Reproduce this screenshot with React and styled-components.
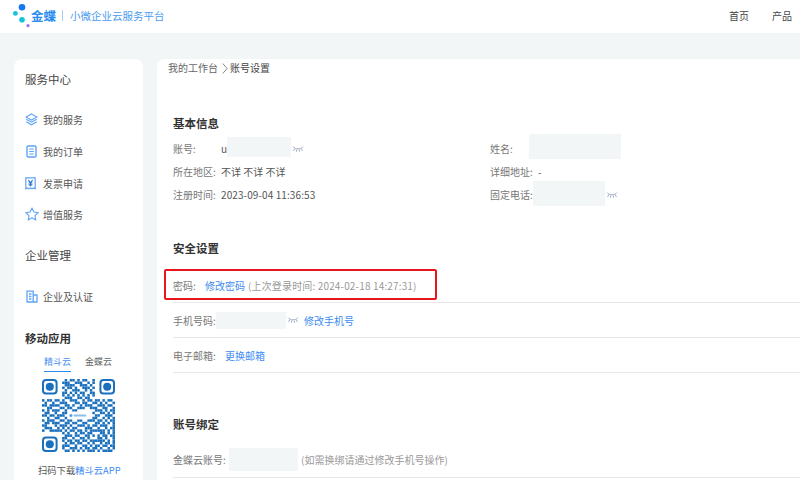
import React from 'react'
import styled, { createGlobalStyle } from 'styled-components'

const FONT = '"Noto Sans CJK SC", "Noto Sans", sans-serif'

// roughly the module layout of the QR code, 29x29 (corners are drawn apart)
const QR_ROWS = [
  '00000000010110101100100000000',
  '00000000111001110010100000000',
  '00000000011110011101000000000',
  '00000000101101001110100000000',
  '00000000010011100101000000000',
  '00000000110101011001100000000',
  '00000000101010101010100000000',
  '00000000011100110110000000000',
  '10110110100111001011011010110',
  '01001001110001101100110101001',
  '11011110011010010111001110110',
  '00110001101100111001110011001',
  '10101110010011000000011101011',
  '01100100110000000000100110101',
  '11011011100000000000011001110',
  '00100110010000000000110010101',
  '10111001101100110011101101011',
  '01101110011011001100011010101',
  '11000101110100111010110111001',
  '01110010101011000111001001011',
  '10011111010110110101111110101',
  '00000000101001011011000110101',
  '00000000011101100110101011011',
  '00000000110010011010001101001',
  '00000000101101101101111110101',
  '00000000010110110010100101101',
  '00000000111001001101011011011',
  '00000000100111010110110100101',
  '00000000011010101011101011110',
]

const QR_BLUE = '#1a70bd'

const MENU = [
  { icon: 'layers', label: '我的服务' },
  { icon: 'order', label: '我的订单' },
  { icon: 'invoice', label: '发票申请' },
  { icon: 'star', label: '增值服务' },
]

function MenuIcon({ name }) {
  const stroke = '#5fa4f5'
  if (name === 'layers') {
    return (
      <svg width="13" height="13" viewBox="0 0 13 13" fill="none" stroke={stroke} strokeWidth="1.1">
        <path d="M6.5 1 12 4 6.5 7 1 4z" />
        <path d="M1.2 6.3 6.5 9.2 11.8 6.3" />
        <path d="M1.2 8.8 6.5 11.8 11.8 8.8" />
      </svg>
    )
  }
  if (name === 'order') {
    return (
      <OffsetIcon $x={1} width="11" height="13" viewBox="0 0 11 13" fill="none" stroke={stroke} strokeWidth="1.4">
        <rect x="1" y="1" width="9" height="11" rx="1.2" />
        <path d="M3.2 4h4.6M3.2 6.5h4.6M3.2 9h4.6" strokeWidth="1" />
      </OffsetIcon>
    )
  }
  if (name === 'invoice') {
    return (
      <svg width="11" height="13" viewBox="0 0 11 13" fill="none" stroke={stroke} strokeWidth="1.2">
        <path d="M.8.8h9.4v11l-1.6-.9-1.5.9-1.6-.9-1.6.9-1.5-.9-1.6.9z" />
        <path d="M3.4 3.2 5.5 5.8l2.1-2.6M3.6 6h3.8M3.6 7.8h3.8M5.5 5.8v3.4" stroke="#2f74d4" />
      </svg>
    )
  }
  if (name === 'star') {
    return (
      <svg width="14" height="14" viewBox="0 0 14 14" fill="none" stroke={stroke} strokeWidth="1.1">
        <path d="M7 1 8.9 5 13.2 5.6 10 8.6 10.8 13 7 10.8 3.2 13 4 8.6.8 5.6 5.1 5z" strokeLinejoin="round" />
      </svg>
    )
  }
  return (
    <OffsetIcon $x={1} width="12" height="13" viewBox="0 0 12 13" fill="none" stroke={stroke} strokeWidth="1.3">
      <path d="M1 12V1.2h6.2V12M7.2 5H11v7H.6" />
      <path d="M3 4h2.4M3 6.5h2.4M3 9h2.4" />
    </OffsetIcon>
  )
}

function EyeClosed() {
  return (
    <EyeIcon width="12" height="8" viewBox="0 0 12 8" fill="none" stroke="#98a6bc" strokeWidth="0.9">
      <path d="M1 1.5C3 4.6 9 4.6 11 1.5" />
      <path d="M2.8 3.6 1.6 6M4.8 4.4 4.4 6.8M7.2 4.4 7.6 6.8M9.2 3.6 10.4 6" />
    </EyeIcon>
  )
}

function Finder({ x, y }) {
  return (
    <g>
      <rect x={x + 0.4} y={y + 0.4} width="5.4" height="5.4" rx="1.2" fill="none" stroke={QR_BLUE} strokeWidth="0.8" />
      <circle cx={x + 3.1} cy={y + 3.1} r="1.6" fill={QR_BLUE} />
    </g>
  )
}

function Qr() {
  return (
    <QrBox width="73" height="73" viewBox="0 0 29 29">
      {QR_ROWS.map((row, y) =>
        row.split('').map((c, x) =>
          c === '1' ? <rect key={`${x}-${y}`} x={x} y={y} width="1" height="1" fill={QR_BLUE} /> : null
        )
      )}
      <Finder x={0} y={0} />
      <Finder x={22.8} y={0} />
      <Finder x={0} y={22.8} />
      <rect x="10.5" y="13" width="8" height="3" fill="#fff" />
      <circle cx="11.5" cy="14.5" r="0.6" fill="#4aa0ee" />
      <rect x="12.6" y="14.1" width="5" height="0.8" fill="#8fbdec" />
    </QrBox>
  )
}

export default function App() {
  return (
    <Page>
      <GlobalStyle />
      <Header>
        <Brand>
          <LogoMark width="23" height="33" viewBox="0 0 23 33">
            <circle cx="14" cy="7.3" r="3.3" fill="#1678f0" />
            <circle cx="7.4" cy="13.4" r="2.4" fill="#12c3dc" />
            <circle cx="14" cy="19.7" r="2.8" fill="#12c3dc" />
            <circle cx="20" cy="25.7" r="1.6" fill="#a56cf0" />
          </LogoMark>
          <BrandText>
            <LogoText>金蝶</LogoText>
            <BrandDivider />
            <BrandTitle>小微企业云服务平台</BrandTitle>
          </BrandText>
        </Brand>
        <Nav>
          <NavItem>首页</NavItem>
          <NavItem>产品</NavItem>
        </Nav>
      </Header>

      <Body>
        <Sidebar>
          <SideTitle>服务中心</SideTitle>
          <MenuList>
            {MENU.map(m => (
              <MenuItem key={m.label}>
                <IconSlot><MenuIcon name={m.icon} /></IconSlot>
                {m.label}
              </MenuItem>
            ))}
          </MenuList>
          <SideTitle>企业管理</SideTitle>
          <CompanyItem>
            <IconSlot><MenuIcon name="company" /></IconSlot>
            企业及认证
          </CompanyItem>
          <MobileTitle>移动应用</MobileTitle>
          <Tabs>
            <Tab $active>精斗云</Tab>
            <Tab>金蝶云</Tab>
          </Tabs>
          <Qr />
          <QrCaption>扫码下载<Link>精斗云APP</Link></QrCaption>
        </Sidebar>

        <Main>
          <Crumb>
            我的工作台
            <CrumbArrow width="6" height="11" viewBox="0 0 6 11" fill="none" stroke="#777" strokeWidth="0.9">
              <path d="M.8.6 5.2 5.5.8 10.4" />
            </CrumbArrow>
            <CrumbCurrent>账号设置</CrumbCurrent>
          </Crumb>

          <SectionTitle>基本信息</SectionTitle>
          <InfoGrid>
            <InfoCell>
              <Label $w={48}>账号:</Label>
              <Value>u</Value>
              <Mask $w={64} $h={20} $mb={4} />
              <EyeClosed />
            </InfoCell>
            <InfoCell>
              <Label $w={39}>姓名:</Label>
              <Mask $w={92} $h={25} $mb={5} />
            </InfoCell>
            <InfoCell>
              <Label $w={48}>所在地区:</Label>
              <Value>不详 不详 不详</Value>
            </InfoCell>
            <InfoCell>
              <Label $w={48}>详细地址:</Label>
              <Value>-</Value>
            </InfoCell>
            <InfoCell>
              <Label $w={48}>注册时间:</Label>
              <Value $spaced>2023-09-04 11:36:53</Value>
            </InfoCell>
            <InfoCell>
              <Label $w={43}>固定电话:</Label>
              <Mask $w={72} $h={25} $mb={2} />
              <EyeClosed />
            </InfoCell>
          </InfoGrid>

          <SecurityTitle>安全设置</SecurityTitle>
          <RowList>
            <Row>
              <Label $w={32}>密码:</Label>
              <Link>修改密码</Link>
              <Hint $spaced>(上次登录时间: 2024-02-18 14:27:31)</Hint>
              <Highlight />
            </Row>
            <Row>
              <Label $w={43}>手机号码:</Label>
              <Mask $w={70} $h={17} />
              <EyeClosed />
              <Link $ml={5}>修改手机号</Link>
            </Row>
            <Row>
              <Label $w={52}>电子邮箱:</Label>
              <Link>更换邮箱</Link>
            </Row>
          </RowList>

          <BindTitle>账号绑定</BindTitle>
          <BindRow>
            <Label $w={56}>金蝶云账号:</Label>
            <Mask $w={69} $h={23} />
            <Hint>(如需换绑请通过修改手机号操作)</Hint>
          </BindRow>
        </Main>
      </Body>
    </Page>
  )
}

const GlobalStyle = createGlobalStyle`
  html, body {
    margin:0;
    padding:0;
    overflow:hidden;
  }
`

const Page = styled.div`
  width:800px;
  height:480px;
  overflow:hidden;
  background:#f2f6f6;
  font-family:${FONT};
  font-size:10px;
  color:#555;
`

const Header = styled.header`
  height:33px;
  background:#fff;
  display:flex;
  align-items:center;
  justify-content:space-between;
`

const Brand = styled.div`
  display:flex;
  align-items:center;
  padding-left:8px;
`

const LogoMark = styled.svg`
  display:block;
`

const BrandText = styled.div`
  display:flex;
  align-items:center;
  padding-bottom:2px;
`

const LogoText = styled.span`
  font-size:12.5px;
  font-weight:700;
  color:#2a8cf0;
  width:25px;
  white-space:nowrap;
`

const BrandDivider = styled.span`
  width:1px;
  height:11px;
  background:#a8cdf5;
  margin:0 7px 0 6px;
`

const BrandTitle = styled.span`
  font-size:10.5px;
  color:#4a9af0;
`

const Nav = styled.nav`
  display:flex;
  gap:23px;
  padding:0 8px 3px 0;
`

const NavItem = styled.span`
  font-size:10px;
  color:#444;
`

const Body = styled.div`
  display:flex;
  gap:14px;
  padding:26px 0 0 14px;
`

const Sidebar = styled.aside`
  width:129px;
  height:440px;
  flex:none;
  background:#fff;
  border-radius:8px 8px 0 0;
  padding:11px 0 0 11px;
  box-sizing:border-box;
`

const SideTitle = styled.div`
  font-size:11.5px;
  line-height:18px;
  color:#444;
`

const MenuList = styled.div`
  display:flex;
  flex-direction:column;
  margin:15px 0 15px;
`

const MenuItem = styled.div`
  height:32px;
  display:flex;
  align-items:center;
  font-size:10px;
  color:#555;
  &:last-child {
    margin-top:-1px;
    margin-bottom:1px;
  }
`

const CompanyItem = styled(MenuItem)`
  margin-top:16px;
`

const IconSlot = styled.span`
  width:18px;
  flex:none;
  display:flex;
  align-items:center;
`

const OffsetIcon = styled.svg`
  margin-left:${p => p.$x}px;
`

const MobileTitle = styled.div`
  font-size:11.5px;
  font-weight:700;
  line-height:18px;
  color:#333;
  margin-top:17px;
`

const Tabs = styled.div`
  display:flex;
  gap:14px;
  margin:8px 0 7px 19px;
`

const Tab = styled.span`
  width:27px;
  font-size:9px;
  line-height:14px;
  padding-bottom:2px;
  text-align:center;
  white-space:nowrap;
  color:${p => (p.$active ? '#4a8ff0' : '#666')};
  border-bottom:1px solid ${p => (p.$active ? '#2a8cf0' : 'transparent')};
`

const QrBox = styled.svg`
  display:block;
  margin-left:17px;
`

const QrCaption = styled.div`
  font-size:9.3px;
  line-height:14px;
  margin-top:11px;
  margin-left:13px;
  white-space:nowrap;
  color:#555;
`

const Link = styled.span`
  color:#3d8bf0;
  white-space:nowrap;
  margin-left:${p => (p.$ml ? `${p.$ml}px` : '0')};
`

const Main = styled.main`
  flex:1;
  height:440px;
  background:#fff;
  border-radius:8px 0 0 0;
  padding:0 0 0 16px;
  box-sizing:border-box;
`

const Crumb = styled.div`
  display:flex;
  align-items:center;
  font-size:10px;
  line-height:18px;
  margin-left:-5px;
  color:#666;
`

const CrumbArrow = styled.svg`
  display:block;
  margin:0 2px 0 4px;
`

const CrumbCurrent = styled.span`
  color:#444;
`

const SectionTitle = styled.h3`
  margin:36px 0 0;
  font-size:11.5px;
  line-height:20px;
  font-weight:700;
  color:#333;
`

const SecurityTitle = styled(SectionTitle)`
  margin-top:32px;
`

const BindTitle = styled(SectionTitle)`
  margin-top:41px;
`

const InfoGrid = styled.div`
  display:grid;
  grid-template-columns:317px 1fr;
  grid-auto-rows:23px;
  margin-top:4px;
`

const InfoCell = styled.div`
  display:flex;
  align-items:center;
`

const Label = styled.span`
  width:${p => p.$w}px;
  flex:none;
  color:#777;
  white-space:nowrap;
`

const Value = styled.span`
  color:#555;
  white-space:nowrap;
  letter-spacing:${p => (p.$spaced ? '.1px' : '0')};
`

const Mask = styled.span`
  display:block;
  flex:none;
  width:${p => p.$w}px;
  height:${p => p.$h}px;
  margin-bottom:${p => p.$mb || 0}px;
  background:#f3f6f6;
`

const EyeIcon = styled.svg`
  display:block;
  margin-left:1px;
`

const RowList = styled.div`
  margin-top:10px;
`

const Row = styled.div`
  position:relative;
  height:34px;
  display:flex;
  align-items:center;
  border-bottom:1px solid #e8e8e8;
`

const BindRow = styled(Row)`
  margin-top:8px;
  height:35px;
`

const Hint = styled.span`
  color:#999;
  margin-left:3px;
  white-space:nowrap;
  letter-spacing:${p => (p.$spaced ? '.15px' : '0')};
`

const Highlight = styled.span`
  position:absolute;
  left:-9px;
  top:1px;
  width:269px;
  height:27px;
  border:2px solid #e8161c;
  border-radius:2px;
`
